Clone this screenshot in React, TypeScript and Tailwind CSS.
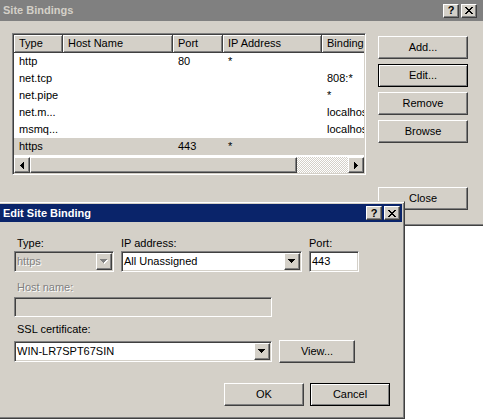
import React from "react";

type Binding = {
  type: string;
  host: string;
  port: string;
  ip: string;
  info: string;
};

const bindings: Binding[] = [
  { type: "http", host: "", port: "80", ip: "*", info: "" },
  { type: "net.tcp", host: "", port: "", ip: "", info: "808:*" },
  { type: "net.pipe", host: "", port: "", ip: "", info: "*" },
  { type: "net.m...", host: "", port: "", ip: "", info: "localhost" },
  { type: "msmq...", host: "", port: "", ip: "", info: "localhost" },
  { type: "https", host: "", port: "443", ip: "*", info: "" },
];

const columns: { label: string; key: keyof Binding; width: string }[] = [
  { label: "Type", key: "type", width: "w-[49px]" },
  { label: "Host Name", key: "host", width: "w-[110px]" },
  { label: "Port", key: "port", width: "w-[50px]" },
  { label: "IP Address", key: "ip", width: "w-[99px]" },
  { label: "Binding", key: "info", width: "w-[120px]" },
];

// classic 3D frames
const raised =
  "bg-[#d4d0c8] border border-t-white border-l-white border-r-[#404040] border-b-[#404040] shadow-[inset_-1px_-1px_0_#808080]";
const defaultRaised =
  "bg-[#d4d0c8] border border-black shadow-[inset_1px_1px_0_#fff,inset_-1px_-1px_0_#808080]";
const sunken =
  "border border-t-[#808080] border-l-[#808080] border-r-white border-b-white shadow-[inset_1px_1px_0_#404040,inset_-1px_-1px_0_#d4d0c8]";

function DownArrow({ disabled = false }: { disabled?: boolean }) {
  const d = "M0 0h7v1H0z M1 1h5v1H1z M2 2h3v1H2z M3 3h1v1H3z";
  return (
    <svg width="8" height="5" viewBox="0 0 8 5" shapeRendering="crispEdges">
      {disabled && <path d={d} fill="#fff" transform="translate(1 1)" />}
      <path d={d} fill={disabled ? "#808080" : "#000"} />
    </svg>
  );
}

function SideArrow({ dir }: { dir: "left" | "right" }) {
  const d =
    dir === "left"
      ? "M3 0h1v7H3z M2 1h1v5H2z M1 2h1v3H1z M0 3h1v1H0z"
      : "M0 0h1v7H0z M1 1h1v5H1z M2 2h1v3H2z M3 3h1v1H3z";
  return (
    <svg width="4" height="7" viewBox="0 0 4 7" shapeRendering="crispEdges">
      <path d={d} fill="#000" />
    </svg>
  );
}

function CloseGlyph() {
  return (
    <svg width="8" height="7" viewBox="0 0 8 7" shapeRendering="crispEdges">
      <path
        d="M0 0h2v1H0z M6 0h2v1H6z M1 1h2v1H1z M5 1h2v1H5z M2 2h4v1H2z M3 3h2v1H3z M2 4h4v1H2z M1 5h2v1H1z M5 5h2v1H5z M0 6h2v1H0z M6 6h2v1H6z"
        fill="#000"
      />
    </svg>
  );
}

function CaptionButton({ children, className = "" }: { children: React.ReactNode; className?: string }) {
  return (
    <div className={`${raised} w-[16px] h-[14px] flex items-center justify-center ${className}`}>
      {children}
    </div>
  );
}

function TitleBar({ title, active, className = "" }: { title: string; active: boolean; className?: string }) {
  return (
    <div
      className={`flex items-center pl-[3px] shrink-0 ${active ? "bg-[#0a246a] text-white" : "bg-[#808080] text-[#d4d0c8]"} ${className}`}
    >
      <span className="flex-1 font-bold whitespace-nowrap">{title}</span>
      <CaptionButton>
        <span className="font-bold text-black text-[11px] leading-none">?</span>
      </CaptionButton>
      <CaptionButton className="ml-[2px]">
        <CloseGlyph />
      </CaptionButton>
    </div>
  );
}

function Button({ label, isDefault = false, className = "" }: { label: string; isDefault?: boolean; className?: string }) {
  return (
    <div
      className={`${isDefault ? defaultRaised : raised} h-[23px] flex items-center justify-center shrink-0 ${className}`}
    >
      {label}
    </div>
  );
}

function BindingsList() {
  return (
    <div className={`${sunken} w-[354px] h-[142px] bg-white p-[1px] flex flex-col overflow-hidden shrink-0`}>
      <div className="flex h-[18px] shrink-0 overflow-hidden">
        {columns.map((col) => (
          <div
            key={col.key}
            className={`${col.width} shrink-0 h-full flex items-center px-[5px] whitespace-nowrap overflow-hidden bg-[#d4d0c8] border-r border-b border-r-[#404040] border-b-[#404040] shadow-[inset_1px_1px_0_#fff,inset_-1px_-1px_0_#808080]`}
          >
            {col.label}
          </div>
        ))}
      </div>
      {bindings.map((b, i) => (
        <div
          key={`${b.type}-${i}`}
          className={`flex h-[17px] shrink-0 overflow-hidden ${b.type === "https" ? "bg-[#d4d0c8]" : ""}`}
        >
          {columns.map((col) => (
            <div
              key={col.key}
              className={`${col.width} shrink-0 flex items-center px-[5px] whitespace-nowrap overflow-hidden`}
            >
              {b[col.key]}
            </div>
          ))}
        </div>
      ))}
      <div className="flex-1" />
      {/* horizontal scrollbar */}
      <div className="flex h-[16px] shrink-0">
        <div className={`${raised} w-[16px] flex items-center justify-center`}>
          <SideArrow dir="left" />
        </div>
        <div className={`${raised} w-[267px]`} />
        <div className="flex-1 bg-[image:repeating-conic-gradient(#d4d0c8_0_25%,#ffffff_0_50%)] bg-[length:2px_2px]" />
        <div className={`${raised} w-[16px] flex items-center justify-center`}>
          <SideArrow dir="right" />
        </div>
      </div>
    </div>
  );
}

function SiteBindingsWindow() {
  return (
    <div className="absolute left-0 top-0 w-[483px] h-[226px] bg-[#d4d0c8] border-b border-b-[#404040] shadow-[inset_0_-1px_0_#808080] flex flex-col">
      <TitleBar title="Site Bindings" active={false} className="h-[21px] pr-[6px]" />
      <div className="flex pl-[12px] pt-[12px]">
        <BindingsList />
        <div className="ml-[12px] w-[90px] pt-[3px] flex flex-col gap-[5px]">
          <Button label="Add..." />
          <Button label="Edit..." isDefault />
          <Button label="Remove" />
          <Button label="Browse" />
          <Button label="Close" className="mt-[39px]" />
        </div>
      </div>
    </div>
  );
}

function ComboBox({ value, disabled = false, className = "" }: { value: string; disabled?: boolean; className?: string }) {
  return (
    <div className={`${sunken} h-[21px] p-[1px] flex ${disabled ? "bg-[#d4d0c8]" : "bg-white"} ${className}`}>
      <div
        className={`flex-1 flex items-center pl-[1px] overflow-hidden whitespace-nowrap ${disabled ? "text-[#808080] [text-shadow:1px_1px_0_#fff]" : ""}`}
      >
        {value}
      </div>
      <div className={`${raised} w-[16px] flex items-center justify-center`}>
        <DownArrow disabled={disabled} />
      </div>
    </div>
  );
}

function TextBox({ value = "", disabled = false, className = "" }: { value?: string; disabled?: boolean; className?: string }) {
  return (
    <div
      className={`${sunken} p-[1px] flex items-center pl-[2px] whitespace-nowrap ${disabled ? "bg-[#d4d0c8]" : "bg-white"} ${className}`}
    >
      {value}
    </div>
  );
}

function EditBindingDialog() {
  return (
    <div className="absolute left-[-3px] top-[201px] w-[408px] h-[218px] bg-[#d4d0c8] border border-t-[#d4d0c8] border-l-[#d4d0c8] border-r-[#404040] border-b-[#404040] shadow-[inset_1px_1px_0_#fff,inset_-1px_-1px_0_#808080] p-[2px] flex flex-col">
      <TitleBar title="Edit Site Binding" active className="h-[18px] pr-[2px]" />
      <div className="flex flex-col pl-[14px] pr-[12px] pt-[15px]">
        <div className="flex">
          <div className="w-[100px] flex flex-col">
            <div className="h-[13px] pl-[3px]">Type:</div>
            <ComboBox value="https" disabled className="mt-[1px]" />
          </div>
          <div className="w-[181px] ml-[7px] flex flex-col">
            <div className="h-[13px]">IP address:</div>
            <ComboBox value="All Unassigned" className="mt-[1px]" />
          </div>
          <div className="w-[50px] ml-[7px] flex flex-col">
            <div className="h-[13px]">Port:</div>
            <TextBox value="443" className="mt-[1px] h-[21px]" />
          </div>
        </div>

        <div className="h-[13px] mt-[9px] pl-[3px] text-[#808080] [text-shadow:1px_1px_0_#fff]">Host name:</div>
        <TextBox disabled className="mt-[3px] w-[258px] h-[20px]" />

        <div className="h-[13px] mt-[6px] pl-[3px]">SSL certificate:</div>
        <div className="flex items-center mt-[4px]">
          <ComboBox value="WIN-LR7SPT67SIN" className="w-[258px]" />
          <Button label="View..." className="w-[76px] ml-[7px]" />
        </div>

        <div className="flex justify-end gap-[6px] mt-[20px]">
          <Button label="OK" className="w-[80px]" />
          <Button label="Cancel" isDefault className="w-[80px]" />
        </div>
      </div>
    </div>
  );
}

export default function App() {
  return (
    <div className="relative w-[483px] h-[420px] overflow-hidden bg-white font-['Liberation_Sans',Arial,sans-serif] text-[11px] leading-[13px] text-black">
      <SiteBindingsWindow />
      <EditBindingDialog />
    </div>
  );
}
